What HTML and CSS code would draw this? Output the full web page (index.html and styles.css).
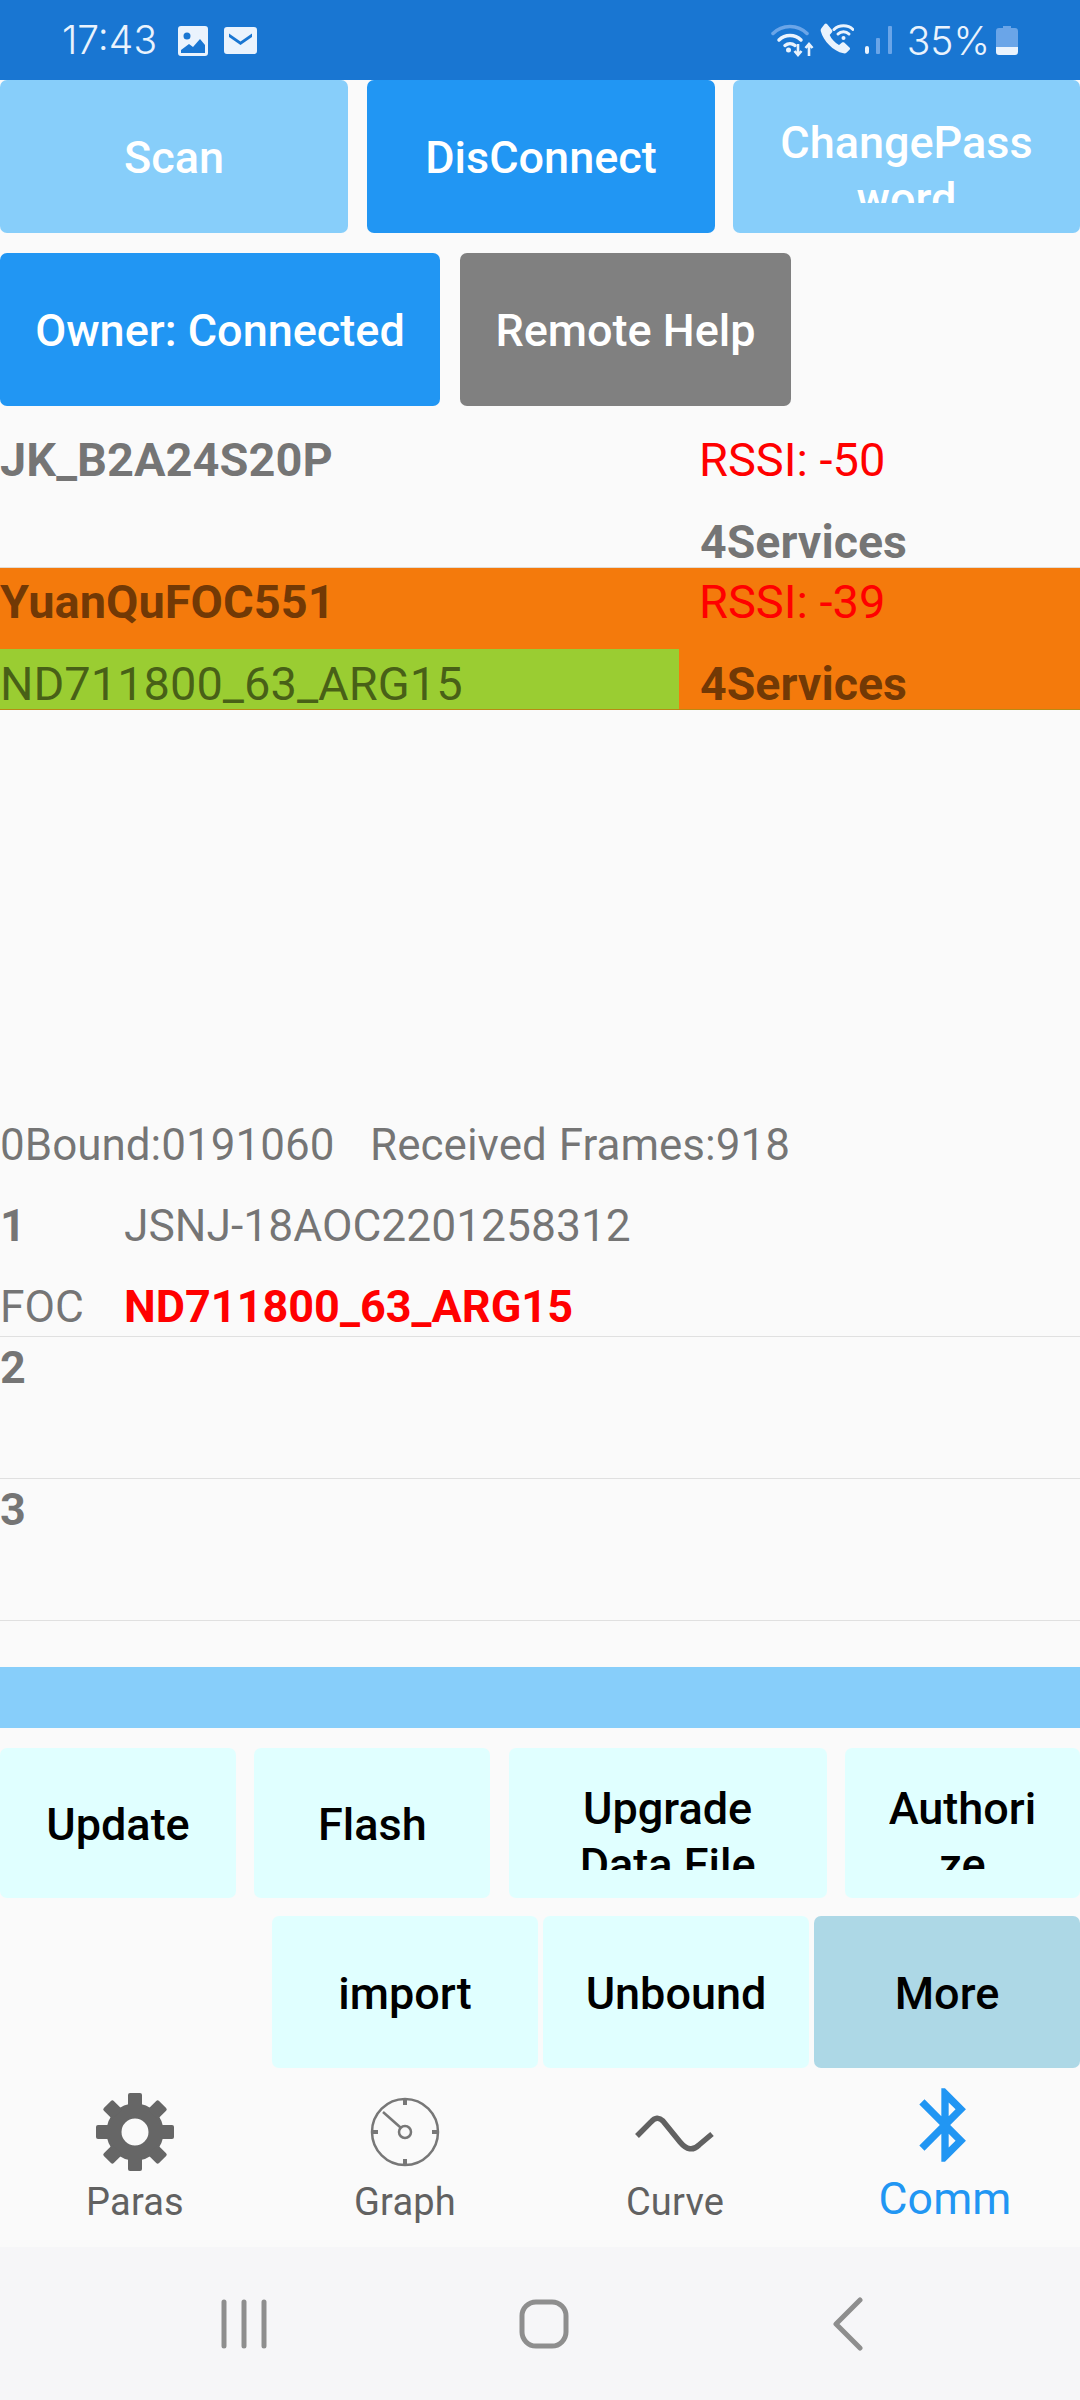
FILE: index.html
```html
<!DOCTYPE html>
<html>
<head>
    <title>Comm</title>
    <link rel="stylesheet" href="styles.css">
</head>
<body>
<div class="screen">

    <div class="status-bar">
        <span class="clock">17:43</span>
        <svg class="st-image" width="32" height="32" viewBox="0 0 32 32">
            <path class="st-fill" fill-rule="evenodd" d="M4 1h24a3 3 0 0 1 3 3v24a3 3 0 0 1-3 3H4a3 3 0 0 1-3-3V4a3 3 0 0 1 3-3zM10 7.500a3.500 3.500 0 1 0 0 7 3.500 3.500 0 0 0 0-7zM4 28h24v-8l-5-6-7 8-4-3-8 6z"/>
        </svg>
        <svg class="st-mail" width="33" height="27" viewBox="0 0 33 27">
            <path class="st-fill" fill-rule="evenodd" d="M3 0h27a3 3 0 0 1 3 3v21a3 3 0 0 1-3 3H3a3 3 0 0 1-3-3V3a3 3 0 0 1 3-3zM5 6.500l11.500 8 11.500-8v3.500l-11.500 8L5 10z"/>
        </svg>
        <div class="status-right">
            <svg class="st-wifi" width="44" height="34" viewBox="0 0 44 34">
                <path class="st-line st-dim" d="M2 10.500C11 1 27 1 36 10.500"/>
                <path class="st-line" d="M8 17C14 11 24 11 30 17"/>
                <path class="st-line" d="M14 22.500C17 20 21 20 24 22.500"/>
                <circle class="st-fill" cx="17.500" cy="27" r="2.500"/>
                <path class="st-thin" d="M27 21v11M23.500 28l3.500 4 3.500-4"/>
                <path class="st-thin" d="M38 33V21M34.500 25l3.500-4 3.500 4"/>
            </svg>
            <svg class="st-call" width="34" height="31" viewBox="0 0 34 31">
                <path class="st-fill" d="M7 1l5 6c.6.8.5 1.600 0 2.300l-2.300 2.800c1.700 4 5 7.600 9.300 9.800l3-2.400c.7-.5 1.500-.5 2.200 0l5.300 5c.7.700.7 1.500 0 2.200l-2.800 2.800c-.8.8-2 1.100-3.200.8C13 28 3.500 18 .8 8.200.5 7 .8 5.800 1.600 5L4.700 1C5.400.3 6.300.3 7 1z"/>
                <path class="st-line st-slim" d="M14 6.500C19 1.500 28 1.500 33 6.500"/>
                <path class="st-line st-slim" d="M18 11C21 8 26 8 29 11"/>
                <circle class="st-fill" cx="23.500" cy="15" r="2"/>
            </svg>
            <svg class="st-signal" width="27" height="28" viewBox="0 0 27 28">
                <rect class="st-fill" x="0" y="20" width="4" height="8" rx="2"/>
                <rect class="st-dimfill" x="11" y="12" width="4" height="16" rx="1"/>
                <rect class="st-dimfill" x="23" y="0" width="4" height="28" rx="1"/>
            </svg>
            <span class="battery-pct">35%</span>
            <svg class="st-battery" width="22" height="29" viewBox="0 0 22 29">
                <path class="st-dimfill" d="M7 0h8v2h4a3 3 0 0 1 3 3v16H0V5a3 3 0 0 1 3-3h4z"/>
                <path class="st-fill" d="M0 21h22v5a3 3 0 0 1-3 3H3a3 3 0 0 1-3-3z"/>
            </svg>
        </div>
    </div>

    <div class="btn-row row-top">
        <div class="btn light-blue w-top"><span class="label">Scan</span></div>
        <div class="btn blue w-top"><span class="label">DisConnect</span></div>
        <div class="btn light-blue w-pass"><span class="label clipped">ChangePass<br>word</span></div>
    </div>
    <div class="btn-row row-owner">
        <div class="btn blue w-owner"><span class="label">Owner: Connected</span></div>
        <div class="btn gray w-help"><span class="label">Remote Help</span></div>
    </div>

    <div class="device-list">
        <div class="device first">
            <div class="dev-left">
                <div class="dev-name">JK_B2A24S20P</div>
                <div class="dev-bound"></div>
            </div>
            <div class="dev-right">
                <div class="dev-name rssi">RSSI: -50</div>
                <div class="dev-bound services">4Services</div>
            </div>
        </div>
        <div class="device selected">
            <div class="dev-left">
                <div class="dev-name">YuanQuFOC551</div>
                <div class="dev-bound bound-match">ND711800_63_ARG15</div>
            </div>
            <div class="dev-right">
                <div class="dev-name rssi">RSSI: -39</div>
                <div class="dev-bound services">4Services</div>
            </div>
        </div>
    </div>

    <div class="bound-info">0Bound:0191060   Received Frames:918</div>

    <div class="slot">
        <div class="slot-line">
            <span class="slot-key strong">1</span>
            <span>JSNJ-18AOC2201258312</span>
        </div>
        <div class="slot-line second">
            <span class="slot-key">FOC</span>
            <span class="slot-foc">ND711800_63_ARG15</span>
        </div>
    </div>
    <div class="slot">
        <div class="slot-line"><span class="slot-key strong">2</span></div>
    </div>
    <div class="slot">
        <div class="slot-line"><span class="slot-key strong">3</span></div>
    </div>

    <div class="progress-bar"></div>

    <div class="btn-row row-actions">
        <div class="btn cyan w-update"><span class="label">Update</span></div>
        <div class="btn cyan w-flash"><span class="label">Flash</span></div>
        <div class="btn cyan w-upgrade"><span class="label clipped">Upgrade<br>Data File</span></div>
        <div class="btn cyan w-auth"><span class="label clipped">Authori<br>ze</span></div>
    </div>
    <div class="btn-row row-more">
        <div class="btn cyan w-third"><span class="label">import</span></div>
        <div class="btn cyan w-third"><span class="label">Unbound</span></div>
        <div class="btn pale w-third"><span class="label">More</span></div>
    </div>

    <div class="tabs">
        <div class="tab">
            <svg class="tab-icon" width="88" height="88" viewBox="-44 -44 88 88">
                <g class="gear">
                    <circle class="gear-ring" r="21"/>
                    <rect id="tooth" x="-7" y="-39" width="14" height="14" rx="2"/>
                    <use href="#tooth" transform="rotate(45)"/>
                    <use href="#tooth" transform="rotate(90)"/>
                    <use href="#tooth" transform="rotate(135)"/>
                    <use href="#tooth" transform="rotate(180)"/>
                    <use href="#tooth" transform="rotate(225)"/>
                    <use href="#tooth" transform="rotate(270)"/>
                    <use href="#tooth" transform="rotate(315)"/>
                </g>
            </svg>
            <span class="tab-label">Paras</span>
        </div>
        <div class="tab">
            <svg class="tab-icon" width="88" height="88" viewBox="-44 -44 88 88">
                <g class="gauge">
                    <circle r="33"/>
                    <circle r="6"/>
                    <path d="M-4.500-4.500L-22-20"/>
                    <path class="gauge-tick" d="M0-33v6M0 33v-6M-33 0h6M33 0h-6"/>
                </g>
            </svg>
            <span class="tab-label">Graph</span>
        </div>
        <div class="tab">
            <svg class="tab-icon" width="88" height="88" viewBox="-44 -44 88 88">
                <path class="wave" d="M-38 4L-24-10Q-18-17-12-11L5 10Q15 22 24 13L37 2"/>
            </svg>
            <span class="tab-label">Curve</span>
        </div>
        <div class="tab active">
            <svg class="tab-icon" width="88" height="88" viewBox="0 0 24 24">
                <path class="bt" d="M17.710 7.710L12 2h-1v7.590L6.410 5 5 6.410 10.590 12 5 17.590 6.410 19 11 14.410V22h1l5.710-5.710-4.300-4.290 4.300-4.290zM13 5.830l1.880 1.880L13 9.590V5.830zm1.880 10.460L13 18.170v-3.760l1.880 1.880z"/>
            </svg>
            <span class="tab-label">Comm</span>
        </div>
    </div>

    <div class="sys-nav">
        <svg width="48" height="50" viewBox="0 0 48 50">
            <path class="sys-stroke" d="M4 3v44M24 3v44M44 3v44"/>
        </svg>
        <svg class="sys-home" width="54" height="54" viewBox="0 0 54 54">
            <rect class="sys-stroke" x="5" y="5" width="44" height="44" rx="14"/>
        </svg>
        <svg class="sys-back" width="34" height="54" viewBox="0 0 34 54">
            <path class="sys-stroke" d="M29 3L5 27l24 24"/>
        </svg>
    </div>

</div>
</body>
</html>
```
FILE: styles.css
```css
* {
    box-sizing: border-box;
}

body {
    margin: 0;
    padding: 0;
    background-color: #fafafa;
    font-family: Roboto, "Noto Sans", sans-serif;
    color: rgba(0, 0, 0, 0.54);
}

.screen {
    width: 1080px;
    height: 2400px;
    display: flex;
    flex-direction: column;
    overflow: hidden;
}

/* status bar */
.status-bar {
    height: 80px;
    flex: none;
    display: flex;
    align-items: center;
    padding-left: 62px;
    background-color: #1976d2;
    color: #eaf3fd;
}

.clock {
    font-family: Inter, Roboto, sans-serif;
    font-size: 39px;
    font-weight: 300;
    width: 115px;
    margin-top: -1px;
}

.st-image {
    margin-top: 1px;
}

.st-mail {
    margin-left: 15px;
}

.status-right {
    margin-left: auto;
    padding-right: 62px;
    display: flex;
    align-items: center;
}

.st-fill {
    fill: #eaf3fd;
}

.st-dimfill {
    fill: #6aa5e8;
}

.st-line {
    fill: none;
    stroke: #eaf3fd;
    stroke-width: 3.5;
    stroke-linecap: round;
}

.st-dim {
    stroke: #6aa5e8;
}

.st-slim {
    stroke-width: 3;
}

.st-thin {
    fill: none;
    stroke: #eaf3fd;
    stroke-width: 2.6;
}

.st-call {
    margin-left: 5px;
    margin-top: -3px;
}

.st-signal {
    margin-left: 11px;
}

.battery-pct {
    font-family: Inter, Roboto, sans-serif;
    font-size: 39px;
    font-weight: 300;
    margin-left: 15px;
}

.st-battery {
    margin-left: 6px;
}

/* buttons */
.btn-row {
    display: flex;
    flex: none;
}

.btn {
    flex: none;
    height: 100%;
    border-radius: 7px;
    display: flex;
    align-items: center;
    justify-content: center;
    text-align: center;
    font-size: 45px;
    font-weight: 500;
    line-height: 53px;
    color: #fff;
}

.label {
    display: block;
    margin-top: 2px;
}

.label.clipped {
    height: 88.500px;
    margin-top: 4.500px;
    line-height: 56px;
    overflow: hidden;
}

.light-blue {
    background-color: #87cefa;
}

.blue {
    background-color: #2196f3;
}

.gray {
    background-color: #808080;
}

.cyan {
    background-color: #e0ffff;
    color: #000;
}

.pale {
    background-color: #add8e6;
    color: #000;
}

.row-top {
    height: 153px;
    justify-content: space-between;
}

.w-top {
    width: 348px;
}

.w-top + .w-top {
    margin-left: 1px;
}

.w-pass {
    width: 347px;
}

.row-owner {
    height: 153px;
    margin-top: 20px;
    column-gap: 20px;
}

.w-owner {
    width: 440px;
}

.w-help {
    width: 331px;
}

/* scanned devices */
.device-list {
    flex: none;
    height: 304px;
}

.device {
    display: flex;
    height: 142px;
    font-size: 47px;
    line-height: 60px;
    border-bottom: 1px solid #e0dcd6;
}

.device.first {
    height: 162px;
    padding-top: 20px;
}

.device.selected {
    background-color: #f47a0c;
    border-bottom-color: #b98a14;
}

.dev-left {
    width: 679px;
}

.dev-right {
    flex: 1;
    padding-left: 21px;
}

.dev-name {
    height: 81px;
    padding-top: 4px;
    font-weight: 700;
}

.dev-bound {
    height: 60px;
    padding-top: 10px;
    line-height: 50px;
}

.bound-match {
    background-color: #9acd32;
}

.services {
    font-weight: 700;
    font-size: 46.500px;
}

.dev-name.rssi {
    font-weight: 400;
    margin-left: -1px;
    color: #f00;
}

/* bound info */
.bound-info {
    flex: none;
    margin-top: 408px;
    font-size: 44px;
    line-height: 54px;
    word-spacing: 1px;
    white-space: pre;
}

.slot {
    flex: none;
    height: 142px;
    padding-top: 4px;
    border-bottom: 1px solid #e0e0e0;
    font-size: 44.400px;
    line-height: 54px;
}

.bound-info + .slot {
    margin-top: 23px;
}

.slot-line {
    display: flex;
}

.slot-line.second {
    margin-top: 27px;
}

.slot-key {
    width: 124px;
}

.strong {
    font-weight: 700;
    font-size: 45px;
}

.slot-foc {
    font-weight: 700;
    font-size: 45px;
    color: #f00;
}

.progress-bar {
    flex: none;
    height: 61px;
    margin-top: 46px;
    background-color: #87cefa;
}

.row-actions {
    height: 150px;
    margin-top: 20px;
    justify-content: space-between;
}

.w-update,
.w-flash {
    width: 236px;
}

.w-upgrade {
    width: 318px;
}

.w-auth {
    width: 235px;
}

.row-more {
    height: 152px;
    margin-top: 18px;
    justify-content: flex-end;
    column-gap: 5px;
}

.w-third {
    width: 266px;
}

/* bottom tabs */
.tabs {
    flex: none;
    height: 179px;
    display: flex;
}

.tab {
    flex: 1;
    display: flex;
    flex-direction: column;
    align-items: center;
    color: #616161;
}

.tab-icon {
    margin-top: 20px;
    height: 88px;
}

.tab-label {
    margin-top: 4px;
    font-size: 38px;
    line-height: 44px;
    letter-spacing: 0.2px;
}

.tab.active {
    color: #2196f3;
}

.tab.active .tab-icon {
    margin-top: 13px;
}

.tab.active .tab-label {
    margin-top: 7px;
    font-size: 44.500px;
    line-height: 47px;
}

.gear {
    fill: #666;
}

.gear-ring {
    fill: none;
    stroke: #666;
    stroke-width: 15;
}

.gauge {
    fill: none;
    stroke: #777;
    stroke-width: 2.5;
}

.gauge-tick {
    stroke-width: 4;
}

.wave {
    fill: none;
    stroke: #616161;
    stroke-width: 5.5;
}

.bt {
    fill: #2196f3;
}

/* system navigation */
.sys-nav {
    flex: 1;
    background-color: #f6f6f8;
    display: flex;
    align-items: center;
    padding-left: 220px;
}

.sys-home {
    margin-left: 249px;
}

.sys-back {
    margin-left: 260px;
}

.sys-stroke {
    fill: none;
    stroke: #8e8e8e;
    stroke-width: 5;
    stroke-linecap: round;
    stroke-linejoin: round;
}
```
